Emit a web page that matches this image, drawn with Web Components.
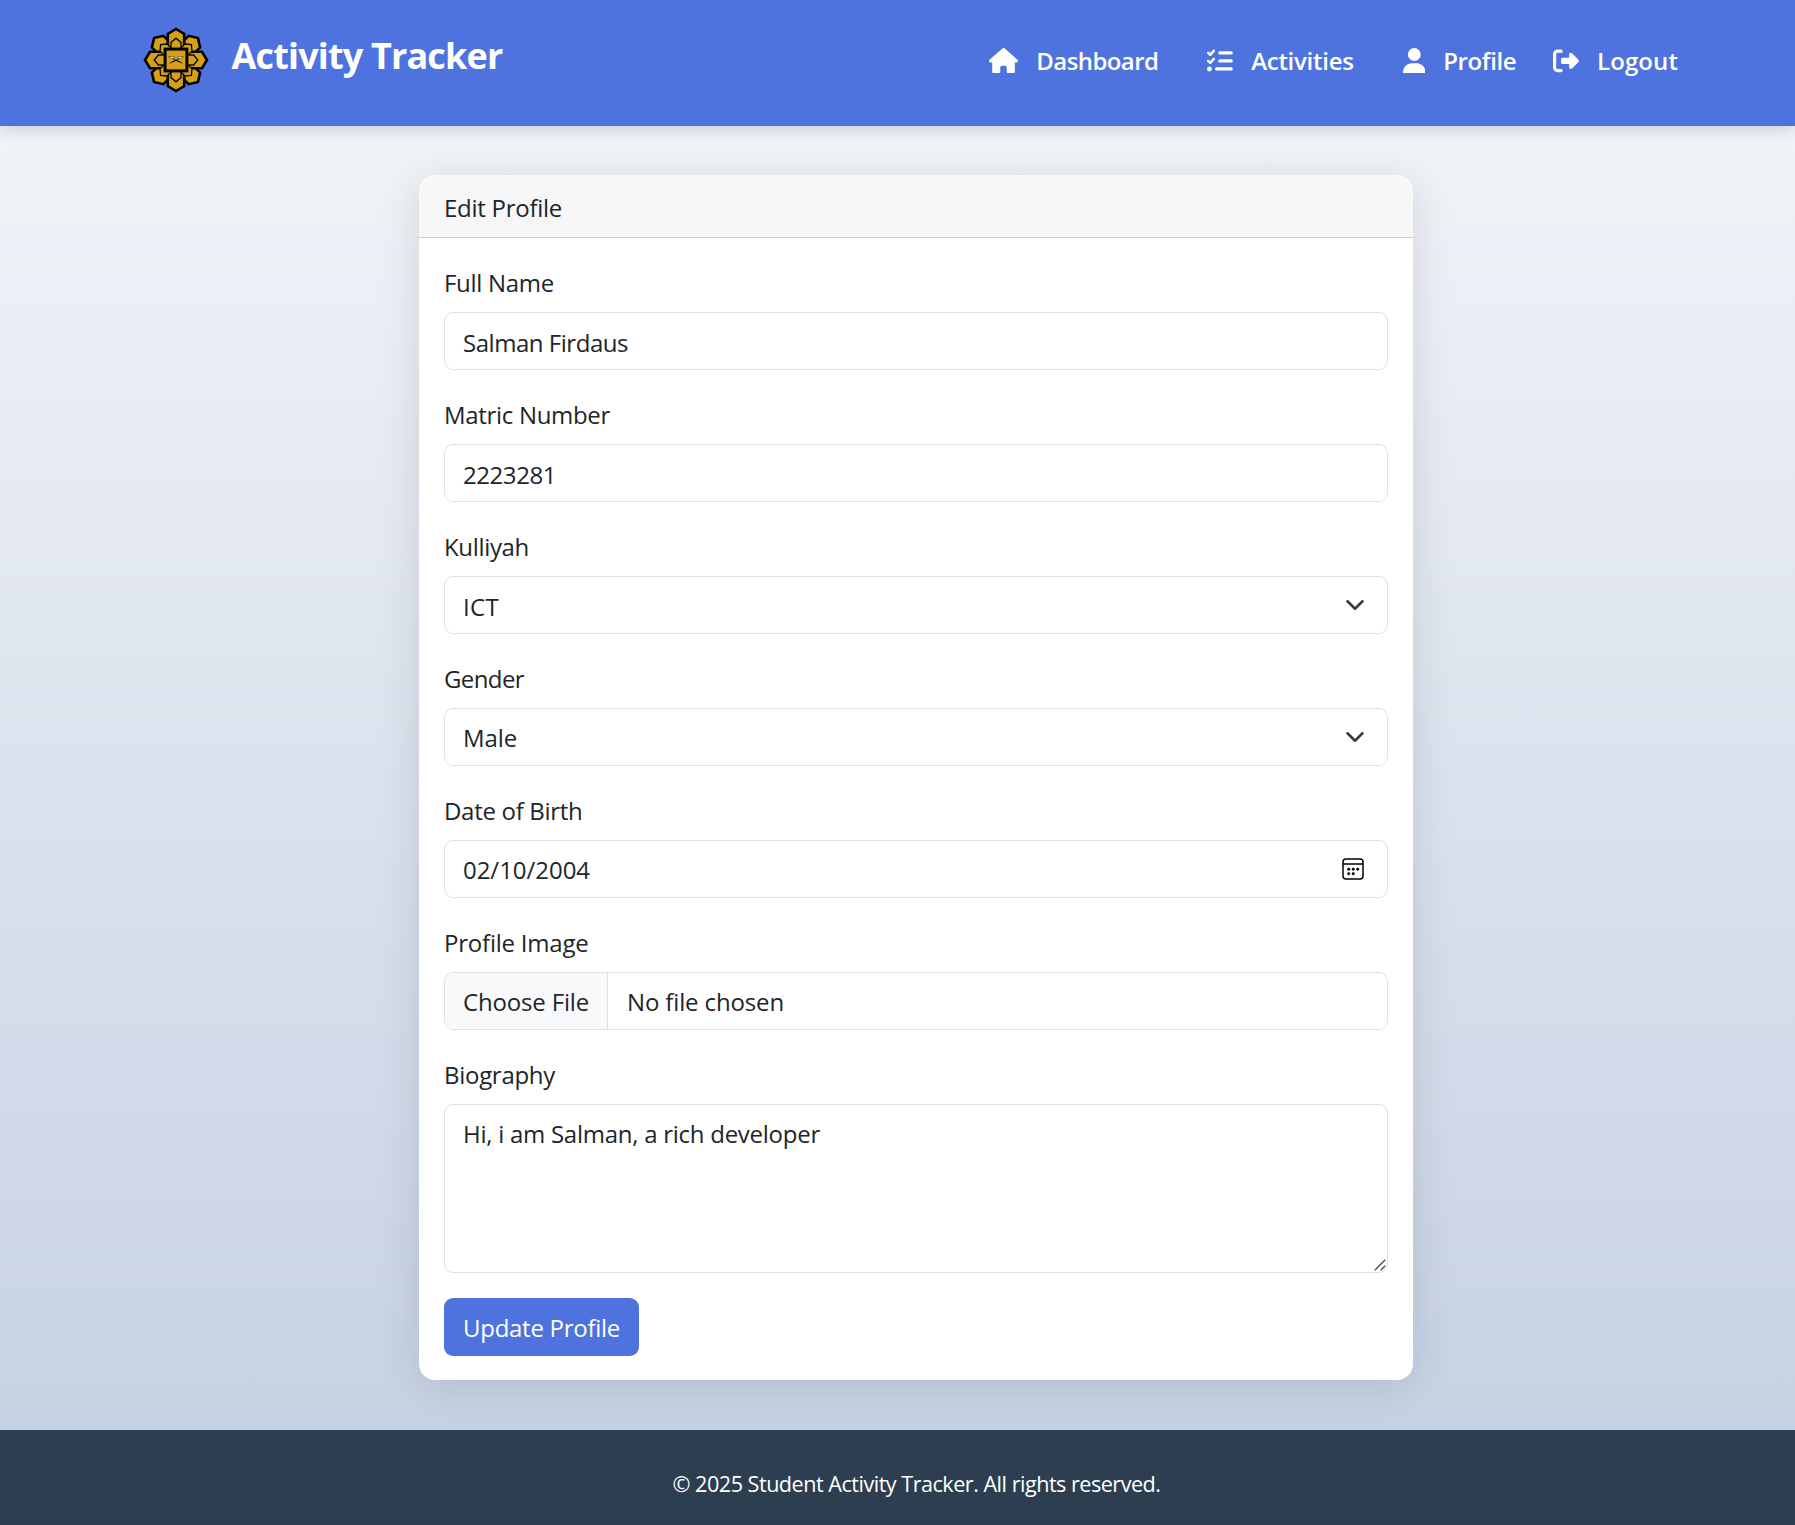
<!DOCTYPE html>
<html lang="en">
<head>
<meta charset="utf-8">
<title>Edit Profile - Activity Tracker</title>
<style>
html,body{margin:0;padding:0}
body{width:100%;height:1525px;overflow:hidden;color:#212529;font:400 24px/36px "Open Sans","Noto Sans",sans-serif;background:linear-gradient(180deg,#f5f7fa,#c3cfe2)}
</style>
</head>
<body>
<activity-app></activity-app>
<script>
// Inline text tuned to a given advance width through its letter spacing.
class FitText extends HTMLElement{
  connectedCallback(){
    const root=this.attachShadow({mode:'open'});
    root.innerHTML='<style>:host{display:inline-block;white-space:nowrap}span{display:inline-block;white-space:pre}</style><span></span>';
    const s=root.querySelector('span');
    s.textContent=this.getAttribute('text');
    const w=parseFloat(this.getAttribute('w'));
    const natural=s.getBoundingClientRect().width;
    s.style.letterSpacing=((w-natural)/s.textContent.length).toFixed(3)+'px';
    this.style.width=w+'px';
  }
}

class AppLogo extends HTMLElement{
  connectedCallback(){
    const ring=(d,sw,angles)=>angles.map(a=>`<path d="${d}" transform="rotate(${a})" stroke-width="${sw}"/>`).join('');
    const outer='M0-31 8.2-26V-10H-8.2V-26Z', inner='M0-21.8 5-17.6V-6H-5V-17.6Z';
    const diag=[45,135,225,315], card=[0,90,180,270];
    this.attachShadow({mode:'open'}).innerHTML=`<style>:host{display:block;width:66px;height:66px;flex:none}svg{display:block}</style>
    <svg width="66" height="66" viewBox="-33 -33 66 66" fill="#d4a017" stroke="#050400">
    ${ring(outer,2.6,diag)}${ring(outer,2.6,card)}${ring(inner,1.3,diag)}${ring(inner,1.3,card)}
    <rect x="-10.9" y="-10.9" width="21.8" height="21.8" stroke-width="3"/>
    <path d="M-7.3-3.4Q-3-4 0-1.8 3-4 7.3-3.4L5-1.6Q2-2 0-.3-2-2-5-1.6Z" fill="#fff" stroke-width=".5"/>
    <path d="M-6.5 3.2 0 .2 6.5 3.2M-3-1 4 2.2M3-1-4 2.2" fill="none" stroke-width=".8"/></svg>`;
  }
}

const ICONS={
home:[576,'M575.8 255.5c0 18-15 32.1-32 32.1l-32 0 .7 160.2c0 2.7-.2 5.4-.5 8.1l0 16.2c0 22.1-17.9 40-40 40l-16 0c-1.1 0-2.2 0-3.3-.1c-1.4 .1-2.8 .1-4.2 .1L416 512l-24 0c-22.1 0-40-17.9-40-40l0-24 0-64c0-17.7-14.3-32-32-32l-64 0c-17.7 0-32 14.3-32 32l0 64 0 24c0 22.1-17.9 40-40 40l-24 0-31.9 0c-1.5 0-3-.1-4.5-.2c-1.2 .1-2.4 .2-3.6 .2l-16 0c-22.1 0-40-17.9-40-40l0-112c0-.9 0-1.9 .1-2.8l0-69.7-32 0c-18 0-32-14-32-32.1c0-9 3-17 10-24L266.4 8c7-7 15-8 22-8s15 2 21 7L564.8 231.5c8 7 12 15 11 24z'],
tasks:[512,'M152.1 38.2c9.9 8.9 10.7 24 1.8 33.9l-72 80c-4.4 4.9-10.6 7.8-17.2 7.9s-12.9-2.4-17.6-7L7 113C-2.3 103.6-2.3 88.4 7 79s24.6-9.4 33.9 0l22.1 22.1 55.1-61.2c8.9-9.9 24-10.7 33.9-1.8zm0 160c9.9 8.9 10.7 24 1.8 33.9l-72 80c-4.4 4.9-10.6 7.8-17.2 7.9s-12.9-2.4-17.6-7L7 273c-9.4-9.4-9.4-24.6 0-33.9s24.6-9.4 33.9 0l22.1 22.1 55.1-61.2c8.9-9.9 24-10.7 33.9-1.8zM224 96c0-17.7 14.3-32 32-32l224 0c17.7 0 32 14.3 32 32s-14.3 32-32 32l-224 0c-17.7 0-32-14.3-32-32zm0 160c0-17.7 14.3-32 32-32l224 0c17.7 0 32 14.3 32 32s-14.3 32-32 32l-224 0c-17.7 0-32-14.3-32-32zM160 416c0-17.7 14.3-32 32-32l288 0c17.7 0 32 14.3 32 32s-14.3 32-32 32l-288 0c-17.7 0-32-14.3-32-32zM48 368a48 48 0 1 1 0 96 48 48 0 1 1 0-96z'],
user:[448,'M224 256A128 128 0 1 0 224 0a128 128 0 1 0 0 256zm-45.7 48C79.8 304 0 383.8 0 482.3C0 498.7 13.3 512 29.7 512l388.6 0c16.4 0 29.7-13.3 29.7-29.7C448 383.8 368.2 304 269.7 304l-91.4 0z'],
logout:[512,'M377.9 105.9L500.7 228.7c7.2 7.2 11.3 17.1 11.3 27.3s-4.1 20.1-11.3 27.3L377.9 406.1c-6.4 6.4-15 9.9-24 9.9c-18.7 0-33.9-15.2-33.9-33.9l0-62.1-128 0c-17.7 0-32-14.3-32-32l0-64c0-17.7 14.3-32 32-32l128 0 0-62.1c0-18.7 15.2-33.9 33.9-33.9c9 0 17.6 3.6 24 9.9zM160 96L96 96c-17.7 0-32 14.3-32 32l0 256c0 17.7 14.3 32 32 32l64 0c17.7 0 32 14.3 32 32s-14.3 32-32 32l-64 0c-53 0-96-43-96-96L0 128C0 75 43 32 96 32l64 0c17.7 0 32 14.3 32 32s-14.3 32-32 32z']
};

class NavLink extends HTMLElement{
  connectedCallback(){
    const [vw,d]=ICONS[this.getAttribute('icon')];
    this.attachShadow({mode:'open'}).innerHTML=`<style>:host{display:flex;align-items:flex-start;gap:18px;font-weight:600;color:#fff}svg{display:block;fill:#fff;margin-top:5px}fit-text{line-height:36px}</style>
    <svg width="${vw/512*25.8}" height="25.8" viewBox="0 0 ${vw} 512"><path d="${d}"/></svg><fit-text text="${this.getAttribute('label')}" w="${this.getAttribute('w')}"></fit-text>`;
  }
}

class AppHeader extends HTMLElement{
  connectedCallback(){
    this.attachShadow({mode:'open'}).innerHTML=`<style>
    :host{display:flex;box-sizing:border-box;height:126px;padding:27px 117px 0 143px;background:#4e73df;box-shadow:0 4px 16px rgba(0,0,0,.15);align-items:flex-start;color:#fff}
    .title{font-size:36px;font-weight:700;line-height:54px;margin:2px 0 0 22.5px}
    nav{display:flex;margin:15.5px 0 0 auto}
    nav-link+nav-link{margin-left:49px}nav-link.last{margin-left:37px}</style>
    <app-logo></app-logo><fit-text class="title" text="Activity Tracker" w="271"></fit-text>
    <nav><nav-link icon="home" label="Dashboard" w="122"></nav-link><nav-link icon="tasks" label="Activities" w="102.5"></nav-link><nav-link icon="user" label="Profile" w="73"></nav-link><nav-link class="last" icon="logout" label="Logout" w="81"></nav-link></nav>`;
  }
}

class FormField extends HTMLElement{
  connectedCallback(){
    const g=n=>this.getAttribute(n), kind=g('kind')||'text';
    const tail={
      select:'<svg class="r" width="20" height="20" viewBox="0 0 16 16" fill="none" stroke="#343a40" stroke-width="2" stroke-linecap="round" stroke-linejoin="round"><path d="m2 5 6 6 6-6"/></svg>',
      date:'<svg class="r" width="22" height="22" viewBox="0 0 22 22" fill="none" stroke="#000" stroke-width="1.5"><rect x="1" y="1" width="20" height="20" rx="3"/><path d="M1 5.9H21"/><g fill="#000" stroke="none"><circle cx="6.7" cy="11.2" r="1.45"/><circle cx="11.2" cy="11.2" r="1.45"/><circle cx="15.7" cy="11.2" r="1.45"/><circle cx="6.7" cy="15.7" r="1.45"/><circle cx="11.2" cy="15.7" r="1.45"/></g></svg>',
      area:'<svg class="grip" width="12" height="12" viewBox="0 0 12 12" stroke="#555" stroke-width="1.5"><path d="M.8 11.2 11.2.8M6.8 11.2 11.2 6.8"/></svg>'
    }[kind]||'';
    const btn=kind==='file'?'<div class="pick"><fit-text text="Choose File" w="126"></fit-text></div>':'';
    this.attachShadow({mode:'open'}).innerHTML=`<style>
    :host{display:block;margin-bottom:24px}
    .label{height:50px;line-height:42px}
    .box{box-sizing:border-box;display:flex;height:58px;border:1px solid #dee2e6;border-radius:9px;background:#fff;padding:0 23px 0 18px;line-height:60px;overflow:hidden}
    .box.late{line-height:58px}
    .select{padding-right:22px}
    .r{margin:auto 0 auto auto}
    .date .r{margin-top:17px}
    .file{padding-left:0}
    .pick{background:#f8f9fa;border-right:1px solid #dee2e6;padding:0 18px;margin-right:19px;width:126px}
    .area{height:169px;padding-right:1px}
    .grip{margin:auto 0 1px auto}</style>
    <div class="label"><fit-text text="${g('label')}" w="${g('lw')}"></fit-text></div>
    <div class="box ${kind} ${(['file','area','date'].includes(kind)||this.hasAttribute('raised'))?'late':''}">${btn}<fit-text text="${g('value')}" w="${g('vw')}"></fit-text>${tail}</div>`;
  }
}

class ProfileCard extends HTMLElement{
  connectedCallback(){
    this.attachShadow({mode:'open'}).innerHTML=`<style>
    :host{display:block;box-sizing:border-box;width:994px;height:1205px;border-radius:16px;background:#fff;box-shadow:0 5px 45px rgba(0,0,0,.12)}
    .head{box-sizing:border-box;height:63px;padding:2px 25px 0;line-height:61px;background:#f7f7f7;border-bottom:1px solid #c8c9ca;border-radius:16px 16px 0 0}
    .body{padding:24px 25px}
    .btn{display:block;box-sizing:border-box;width:195px;height:58px;border-radius:9px;background:#4e73df;color:#fff;padding:1px 19px 0;line-height:58px;margin-top:25px}</style>
    <div class="head"><fit-text text="Edit Profile" w="118"></fit-text></div>
    <div class="body"><slot></slot><div class="btn" role="button"><fit-text text="Update Profile" w="157"></fit-text></div></div>`;
  }
}

class AppFooter extends HTMLElement{
  connectedCallback(){
    this.attachShadow({mode:'open'}).innerHTML=`<style>:host{position:relative;display:flex;justify-content:center;box-sizing:border-box;height:95px;padding:36px 0 0 38px;background:#2c3e50;color:#fff;font-size:21.6px;line-height:36px}</style>
    <fit-text text="© 2025 Student Activity Tracker. All rights reserved." w="488"></fit-text>`;
  }
}

class ActivityApp extends HTMLElement{
  connectedCallback(){
    this.attachShadow({mode:'open'}).innerHTML=`<style>
    :host{display:flex;flex-direction:column;height:1525px}
    main{display:flex;justify-content:center;align-items:flex-start;flex:1;padding:49px 0 0 37px}</style>
    <app-header></app-header>
    <main><profile-card>
    <form-field label="Full Name" lw="110" value="Salman Firdaus" vw="165"></form-field>
    <form-field label="Matric Number" lw="166" value="2223281" vw="93"></form-field>
    <form-field kind="select" label="Kulliyah" lw="85" value="ICT" vw="36"></form-field>
    <form-field kind="select" raised label="Gender" lw="80" value="Male" vw="54"></form-field>
    <form-field kind="date" label="Date of Birth" lw="138.5" value="02/10/2004" vw="127"></form-field>
    <form-field kind="file" label="Profile Image" lw="144.5" value="No file chosen" vw="157"></form-field>
    <form-field kind="area" label="Biography" lw="111" value="Hi, i am Salman, a rich developer" vw="357"></form-field>
    </profile-card></main>
    <app-footer></app-footer>`;
  }
}

customElements.define('fit-text',FitText);
customElements.define('app-logo',AppLogo);
customElements.define('nav-link',NavLink);
customElements.define('app-header',AppHeader);
customElements.define('form-field',FormField);
customElements.define('profile-card',ProfileCard);
customElements.define('app-footer',AppFooter);
customElements.define('activity-app',ActivityApp);
</script>
</body>
</html>
